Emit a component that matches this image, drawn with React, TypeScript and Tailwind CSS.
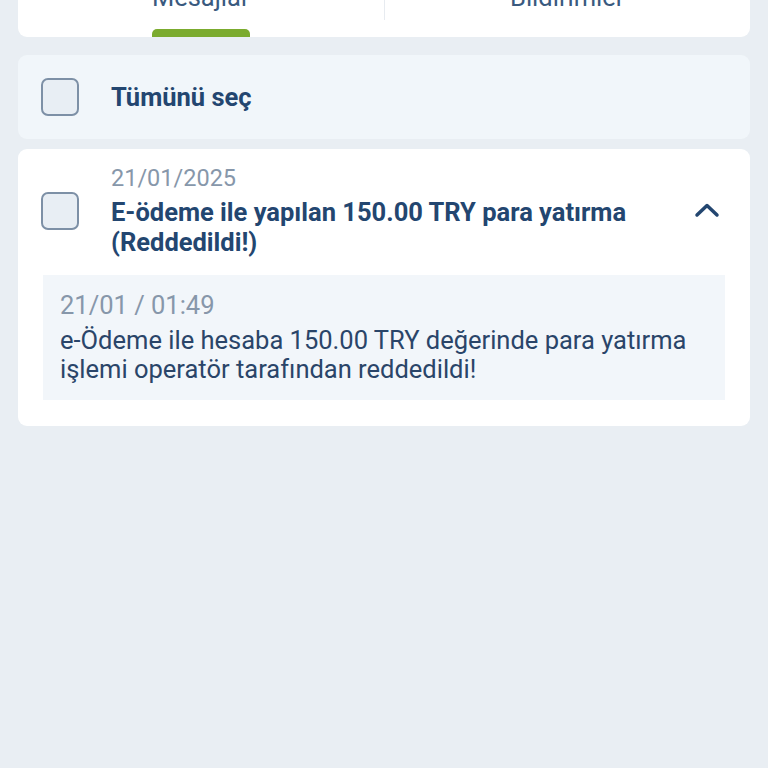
import React from "react";

function Checkbox({ className = "" }: { className?: string }) {
  return (
    <div className={"w-[38px] h-[38px] shrink-0 rounded-[7px] border-2 border-[#7d90a6] bg-[#e8eef4] " + className} />
  );
}

export default function App() {
  return (
    <div
      className="min-h-[768px] w-full bg-[#e9eef3] px-[18px] pb-4 overflow-hidden"
      style={{ fontFamily: "Roboto, 'Noto Sans', sans-serif" }}
    >
      {/* Tabs card */}
      <div className="-mt-[40px] h-[77px] rounded-b-[9px] bg-white flex relative">
        <div className="flex-1 flex flex-col items-center">
          <div className="mt-[22px] text-[25.5px] leading-[30px] text-[#3a5a7f]">Mesajlar</div>
          <div className="mt-auto w-[98px] h-[8px] rounded-t-[5px] bg-[#7bab2e]" />
        </div>
        <div className="w-px h-[60px] bg-[#e7ebf0]" />
        <div className="flex-1 flex flex-col items-center">
          <div className="mt-[22px] text-[25.5px] leading-[30px] text-[#3a5a7f]">Bildirimler</div>
        </div>
      </div>

      {/* Select all */}
      <div className="mt-[18px] h-[84px] rounded-[9px] bg-[#f1f6fa] flex items-center pl-[23px]">
        <Checkbox />
        <div className="ml-[32px] text-[25.5px] font-bold text-[#234670]">Tümünü seç</div>
      </div>

      {/* Message card */}
      <div className="mt-[10px] rounded-[9px] bg-white pt-[14px] pb-[26px]">
        <div className="flex items-start pl-[23px] pr-[30px]">
          <Checkbox className="mt-[29px]" />
          <div className="ml-[32px] flex-1">
            <div className="text-[23.5px] leading-[30px] text-[#8797aa]">21/01/2025</div>
            <div className="mt-[4px] text-[25.5px] leading-[30px] font-bold text-[#234670]">
              E-ödeme ile yapılan 150.00 TRY para yatırma
              <br />
              (Reddedildi!)
            </div>
          </div>
          <svg width="26" height="16" viewBox="0 0 26 16" className="mt-[39px]">
            <path d="M3 13 L13 3.5 L23 13" fill="none" stroke="#234670" strokeWidth="3.5" strokeLinecap="round" strokeLinejoin="round" />
          </svg>
        </div>
        <div className="mx-[25px] mt-[18px] bg-[#f2f6fa] px-[17px] pt-[15px] pb-[16px]">
          <div className="text-[25.5px] leading-[30px] text-[#8797aa]">21/01 / 01:49</div>
          <div className="mt-[6px] text-[25.5px] leading-[29px] text-[#2a4569]">
            e-Ödeme ile hesaba 150.00 TRY değerinde para yatırma
            <br />
            işlemi operatör tarafından reddedildi!
          </div>
        </div>
      </div>
    </div>
  );
}
